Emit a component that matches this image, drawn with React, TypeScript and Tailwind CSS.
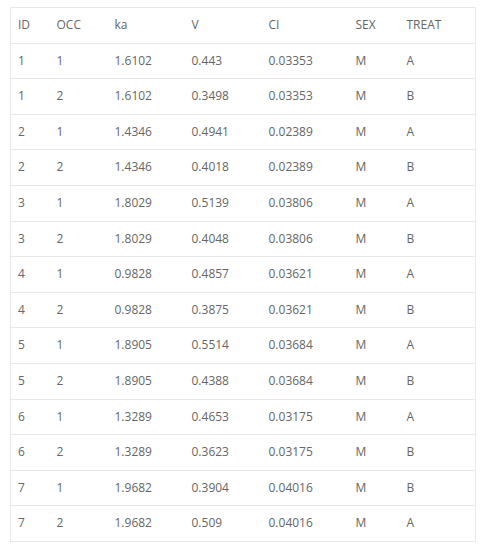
import React from "react";

const header = ["ID", "OCC", "ka", "V", "CI", "SEX", "TREAT"];
const rows: string[][] = [
  ["1", "1", "1.6102", "0.443", "0.03353", "M", "A"],
  ["1", "2", "1.6102", "0.3498", "0.03353", "M", "B"],
  ["2", "1", "1.4346", "0.4941", "0.02389", "M", "A"],
  ["2", "2", "1.4346", "0.4018", "0.02389", "M", "B"],
  ["3", "1", "1.8029", "0.5139", "0.03806", "M", "A"],
  ["3", "2", "1.8029", "0.4048", "0.03806", "M", "B"],
  ["4", "1", "0.9828", "0.4857", "0.03621", "M", "A"],
  ["4", "2", "0.9828", "0.3875", "0.03621", "M", "B"],
  ["5", "1", "1.8905", "0.5514", "0.03684", "M", "A"],
  ["5", "2", "1.8905", "0.4388", "0.03684", "M", "B"],
  ["6", "1", "1.3289", "0.4653", "0.03175", "M", "A"],
  ["6", "2", "1.3289", "0.3623", "0.03175", "M", "B"],
  ["7", "1", "1.9682", "0.3904", "0.04016", "M", "B"],
  ["7", "2", "1.9682", "0.509", "0.04016", "M", "A"],
];

const widths = ["w-[39px]", "w-[58px]", "w-[77px]", "w-[77px]", "w-[87px]", "w-[51px]", "w-[76px]"];

export default function App() {
  return (
    <div className="w-[482px] h-[550px] bg-white pt-[7px] pl-[10px]" style={{ fontFamily: '"Open Sans", sans-serif' }}>
      <table className="w-[465px] border-collapse border border-[#e8e8e8] text-[12px] text-[#666] table-fixed">
        <thead>
          <tr className="border-b border-[#e8e8e8]">
            {header.map((h, i) => (
              <th key={i} className={`${widths[i]} text-left font-normal px-[7px] py-[8px] leading-[18.6px]`}>
                {h}
              </th>
            ))}
          </tr>
        </thead>
        <tbody>
          {rows.map((r, ri) => (
            <tr key={ri} className="border-b border-[#e8e8e8]">
              {r.map((c, ci) => (
                <td key={ci} className="px-[7px] py-[8px] leading-[18.6px]">
                  {c}
                </td>
              ))}
            </tr>
          ))}
        </tbody>
      </table>
    </div>
  );
}
